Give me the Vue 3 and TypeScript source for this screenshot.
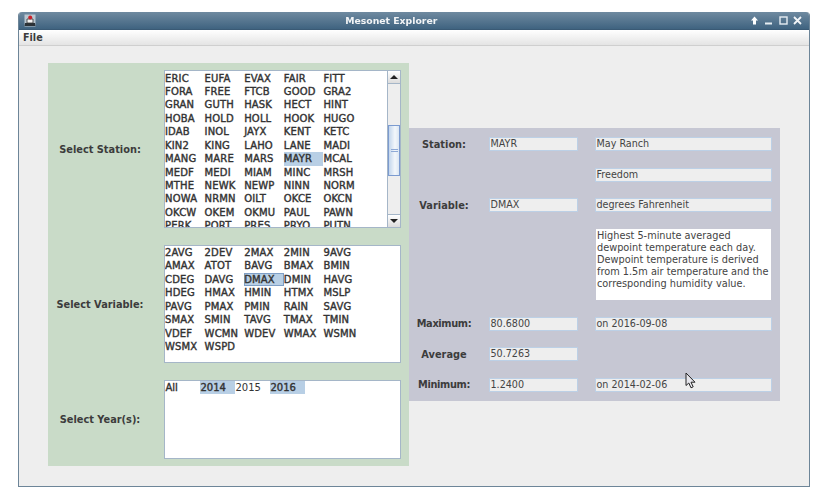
<script setup lang="ts">
const stations: string[] = 'ERIC EUFA EVAX FAIR FITT FORA FREE FTCB GOOD GRA2 GRAN GUTH HASK HECT HINT HOBA HOLD HOLL HOOK HUGO IDAB INOL JAYX KENT KETC KIN2 KING LAHO LANE MADI MANG MARE MARS MAYR MCAL MEDF MEDI MIAM MINC MRSH MTHE NEWK NEWP NINN NORM NOWA NRMN OILT OKCE OKCN OKCW OKEM OKMU PAUL PAWN PERK PORT PRES PRYO PUTN'.split(' ')
const variables: string[] = '2AVG 2DEV 2MAX 2MIN 9AVG AMAX ATOT BAVG BMAX BMIN CDEG DAVG DMAX DMIN HAVG HDEG HMAX HMIN HTMX MSLP PAVG PMAX PMIN RAIN SAVG SMAX SMIN TAVG TMAX TMIN VDEF WCMN WDEV WMAX WSMN WSMX WSPD'.split(' ')
const years = [
  { t: 'All', sel: false, bold: true },
  { t: '2014', sel: true, bold: true },
  { t: '2015', sel: false, bold: false },
  { t: '2016', sel: true, bold: true },
]
</script>

<template>
  <div class="page">
    <div class="window">
      <div class="titlebar">
        <svg class="appicon" width="12" height="13" viewBox="0 0 12 13">
          <rect x="0.5" y="0.5" width="11" height="12" fill="#b9c6d0" />
          <path d="M1 9h10l0.5 3H0.5z" fill="#2b3238" />
          <path d="M3 5h6v4H3z" fill="#f2f2f2" stroke="#333" stroke-width="0.8" />
          <circle cx="6.2" cy="3.4" r="2" fill="#c8202a" />
        </svg>
        <div class="title">Mesonet Explorer</div>
        <div class="winbtns">
          <svg width="9" height="9" viewBox="0 0 9 9"><path d="M4.5 0.5L8 4.5H6V8.5H3V4.5H1z" fill="#fff" /></svg>
          <svg width="9" height="9" viewBox="0 0 9 9"><rect x="1" y="6.5" width="7" height="2" fill="#e6edf2" /></svg>
          <svg width="9" height="9" viewBox="0 0 9 9"><rect x="1" y="1" width="7" height="7" fill="none" stroke="#e6edf2" stroke-width="1.4" /></svg>
          <svg width="9" height="9" viewBox="0 0 9 9"><path d="M1 1L8 8M8 1L1 8" stroke="#f2f5f8" stroke-width="1.8" /></svg>
        </div>
      </div>
      <div class="menubar"><span>File</span></div>
      <div class="content">
        <div class="green">
          <div class="glabel">Select Station:</div>
          <div class="list station">
            <div class="items">
              <div v-for="s in stations" :key="s" class="cell" :class="{ sel: s === 'MAYR' }">{{ s }}</div>
            </div>
            <div class="scrollbar">
              <div class="sbtn"><i class="up"></i></div>
              <div class="track">
                <div class="thumb"><b></b><b></b></div>
              </div>
              <div class="sbtn down"><i class="dn"></i></div>
            </div>
          </div>
          <div class="glabel">Select Variable:</div>
          <div class="list variable">
            <div class="items">
              <div v-for="v in variables" :key="v" class="cell" :class="{ sel: v === 'DMAX', focus: v === 'DMAX' }">{{ v }}</div>
            </div>
          </div>
          <div class="glabel">Select Year(s):</div>
          <div class="list year">
            <div v-for="y in years" :key="y.t" class="ycell" :class="{ sel: y.sel, reg: !y.bold }">{{ y.t }}</div>
          </div>
        </div>
        <div class="purple">
          <div class="plabel">Station:</div>
          <div class="field">MAYR</div>
          <div class="field">May Ranch</div>

          <div class="field c3">Freedom</div>

          <div class="plabel">Variable:</div>
          <div class="field">DMAX</div>
          <div class="field">degrees Fahrenheit</div>

          <div class="desc c3">Highest 5-minute averaged dewpoint temperature each day. Dewpoint temperature is derived from 1.5m air temperature and the corresponding humidity value.</div>

          <div class="plabel tight">Maximum:</div>
          <div class="field">80.6800</div>
          <div class="field">on 2016-09-08</div>

          <div class="plabel">Average</div>
          <div class="field c2">50.7263</div>

          <div class="plabel tight">Minimum:</div>
          <div class="field">1.2400</div>
          <div class="field">on 2014-02-06</div>

          <svg class="cursor" width="12" height="17" viewBox="0 0 12 17">
            <path d="M1 1V13.5L3.8 11L6 15.8L8.2 14.8L6 10.2H10z" fill="#e6e6ec" stroke="#222" stroke-width="1" stroke-linejoin="round" />
          </svg>
        </div>
      </div>
    </div>
  </div>
</template>

<style>
html, body { margin: 0; background: #fff; }
</style>

<style scoped>
.page {
  width: 822px;
  height: 491px;
  box-sizing: border-box;
  padding: 12px 12px 4px 18px;
  font-family: "DejaVu Sans", sans-serif;
  font-size: 9.6px;
  color: #333;
}
.window {
  height: 100%;
  box-sizing: border-box;
  display: flex;
  flex-direction: column;
  background: #eee;
  border: 1px solid #6d8598;
  border-top: 0;
  border-radius: 4px 4px 0 0;
  overflow: hidden;
  filter: blur(0.3px);
}
.titlebar {
  height: 17px;
  flex: none;
  display: flex;
  align-items: center;
  padding-left: 5px;
  background: linear-gradient(#6f8aa0, #3f6380);
  border-bottom: 1px solid #3a5a75;
}
.appicon { flex: none; }
.title {
  flex: 1;
  text-align: center;
  color: #f2f4f6;
  font-weight: bold;
  font-size: 9.3px;
  padding-right: 3px;
}
.winbtns {
  flex: none;
  display: flex;
  gap: 5.5px;
  padding-right: 7px;
}
.menubar {
  height: 15px;
  flex: none;
  display: flex;
  align-items: center;
  padding-left: 4px;
  background: linear-gradient(#fff, #e4e4e4);
  border-bottom: 1px solid #cfcfcf;
  font-weight: bold;
  font-size: 9.6px;
  color: #3c3c3c;
}
.content {
  flex: 1;
  position: relative;
  padding: 17px 0 0 29px;
  display: flex;
  align-items: flex-start;
}
.green {
  width: 361px;
  height: 403px;
  box-sizing: border-box;
  background: #c9dbc8;
  padding: 7px 8px 8px 0;
  display: grid;
  grid-template-columns: 104px 237px;
  grid-template-rows: 158px 118px 79px;
  column-gap: 12px;
  row-gap: 17px;
  align-items: center;
}
.glabel {
  text-align: center;
  font-weight: bold;
  font-size: 9.8px;
  color: #3c3c3c;
}
.list {
  height: 100%;
  box-sizing: border-box;
  background: #fff;
  border: 1px solid #a5b6c8;
  overflow: hidden;
}
.station { display: flex; }
.items {
  flex: 1;
  display: grid;
  grid-template-columns: repeat(5, 39.6px);
  grid-auto-rows: 13.45px;
  align-content: start;
  min-width: 0;
}
.station .items { padding-top: 0.5px; }
.cell {
  font-size: 10px;
  letter-spacing: 0.15px;
  -webkit-text-stroke: 0.4px #333;
  line-height: 13.45px;
  white-space: nowrap;
  box-sizing: border-box;
  color: #333;
}
.cell.sel { background: #b8cfe5; }
.cell.focus { box-shadow: inset 0 0 0 1px #7f9fc6; }
.scrollbar {
  flex: none;
  width: 12px;
  display: flex;
  flex-direction: column;
  background: #eee;
  border-left: 1px solid #a5b6c8;
}
.sbtn {
  height: 13px;
  flex: none;
  display: flex;
  align-items: center;
  justify-content: center;
  background: linear-gradient(#fff, #dcdcdc);
  border-bottom: 1px solid #a5b6c8;
  box-sizing: border-box;
}
.sbtn.down { border-bottom: 0; border-top: 1px solid #a5b6c8; }
.sbtn i { width: 0; height: 0; border-left: 4px solid transparent; border-right: 4px solid transparent; }
.sbtn i.up { border-bottom: 4px solid #222; }
.sbtn i.dn { border-top: 4px solid #222; }
.track { flex: 1; padding-top: 41px; }
.thumb {
  height: 51px;
  box-sizing: border-box;
  border: 1px solid #7c9bd0;
  background: linear-gradient(90deg, #c3d6ec, #f3f7fb 60%, #dbe6f2);
  display: flex;
  flex-direction: column;
  align-items: center;
  justify-content: center;
  gap: 1px;
}
.thumb b { display: block; width: 7px; height: 1px; background: #8ea9d6; }
.year {
  display: grid;
  grid-template-columns: repeat(4, 35px);
  grid-auto-rows: 13px;
  align-content: start;
  margin-top: -0.3px;
}
.ycell {
  font-size: 10px;
  -webkit-text-stroke: 0.4px #333;
  line-height: 13px;
  padding-left: 0.5px;
  color: #333;
}
.ycell.sel { background: #b8cfe5; }
.ycell.reg { -webkit-text-stroke: 0; }
.purple {
  position: relative;
  width: 371px;
  height: 273px;
  margin-top: 65px;
  box-sizing: border-box;
  background: #c6c7d3;
  padding: 9px 0 0;
  display: grid;
  grid-template-columns: 70px 89px 177px;
  grid-template-rows: 14px 14px 14px 71px 14px 14px 14px;
  row-gap: 16.67px;
  align-items: center;
}
.plabel {
  text-align: center;
  font-weight: bold;
  font-size: 9.8px;
  color: #3c3c3c;
  grid-column: 1;
}
.plabel.tight { letter-spacing: -0.35px; }
.field {
  height: 14px;
  box-sizing: border-box;
  background: #eee;
  border: 1px solid #bcd0e6;
  line-height: 12px;
  padding-left: 0.5px;
  font-size: 9.6px;
  color: #444;
  white-space: nowrap;
}
.plabel + .field { margin-left: 10px; width: 89px; }
.plabel + .field + .field { margin-left: 27px; width: 177px; }
.c3 { grid-column: 3; }
.field.c3 { margin-left: 27px; width: 177px; }
.desc {
  height: 71px;
  box-sizing: border-box;
  background: #fff;
  padding: 1px 0 0 1px;
  line-height: 11.9px;
  font-size: 9.75px;
  color: #444;
  width: 175px;
  margin-left: 28px;
}
.c2 { grid-column: 2; }
.cursor { position: absolute; left: 276px; top: 244px; }
</style>
